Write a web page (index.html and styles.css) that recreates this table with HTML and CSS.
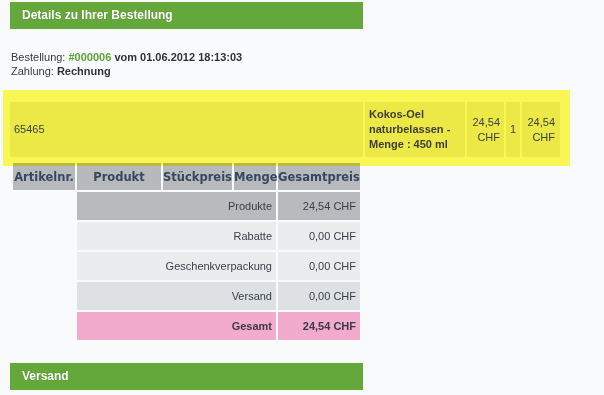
FILE: index.html
```html
<!DOCTYPE html>
<html lang="de">
<head>
<meta charset="utf-8">
<title>Details zu Ihrer Bestellung</title>
<link rel="stylesheet" href="styles.css">
</head>
<body>
<div class="page">
  <div class="bar">Details zu Ihrer Bestellung</div>
  <div class="info">
    <div>Bestellung: <span class="ordno">#000006</span> <b>vom 01.06.2012 18:13:03</b></div>
    <div>Zahlung: <b>Rechnung</b></div>
  </div>
  <div class="hl">
    <div class="hl-cell c-art">65465</div>
    <div class="hl-cell c-prod">Kokos-Oel naturbelassen - Menge : 450 ml</div>
    <div class="hl-cell c-price">24,54 CHF</div>
    <div class="hl-cell c-qty">1</div>
    <div class="hl-cell c-total">24,54 CHF</div>
  </div>
  <table class="order">
    <colgroup>
      <col class="w-art"><col class="w-prod"><col class="w-price"><col class="w-qty"><col class="w-total">
    </colgroup>
    <thead>
      <tr>
        <th>Artikelnr.</th><th>Produkt</th><th>Stückpreis</th><th>Menge</th><th>Gesamtpreis</th>
      </tr>
    </thead>
    <tbody>
      <tr class="r-sub"><td class="empty"></td><td colspan="3">Produkte</td><td>24,54 CHF</td></tr>
      <tr class="r-light"><td class="empty"></td><td colspan="3">Rabatte</td><td>0,00 CHF</td></tr>
      <tr class="r-light"><td class="empty"></td><td colspan="3">Geschenkverpackung</td><td>0,00 CHF</td></tr>
      <tr class="r-ship"><td class="empty"></td><td colspan="3">Versand</td><td>0,00 CHF</td></tr>
      <tr class="r-total"><td class="empty"></td><td colspan="3">Gesamt</td><td>24,54 CHF</td></tr>
    </tbody>
  </table>
  <div class="bar bar-ship">Versand</div>
</div>
</body>
</html>
```
FILE: styles.css
```css
html, body {
  margin: 0;
  padding: 0;
  background: #f9fafc;
}
body {
  font-family: "Liberation Sans", Arial, sans-serif;
  font-size: 11px;
  color: #3a3d44;
}
.page {
  padding: 2px 0 0 10px;
  width: 353px;
}
.bar {
  height: 27px;
  line-height: 27px;
  background: #64a73b;
  color: #ffffff;
  font-weight: bold;
  font-size: 12px;
  padding-left: 12px;
  text-shadow: 0 0 1px rgba(40, 70, 20, 0.35);
}
.bar-ship {
  margin-top: 21px;
}
.info {
  margin-top: 21px;
  padding-left: 1px;
  line-height: 14px;
  color: #3a3a3a;
}
.info b {
  color: #333333;
}
.ordno {
  color: #5ea43a;
  font-weight: bold;
}
.hl {
  position: relative;
  z-index: 1;
  mix-blend-mode: multiply;
  display: flex;
  gap: 2px;
  width: 550px;
  margin: 12px 0 -5px -7px;
  padding: 12px 10px 9px 7px;
  background: #fffc57;
}
.hl-cell {
  background: #f2ed47;
  display: flex;
  align-items: center;
  line-height: 15px;
  height: 55px;
  box-sizing: border-box;
  color: #3d434c;
}
.c-art {
  width: 353px;
  padding-left: 4px;
}
.c-prod {
  width: 100px;
  padding: 0 4px;
  font-weight: bold;
  color: #3f3f3a;
}
.c-price {
  width: 37px;
  padding: 0 4px;
  justify-content: flex-end;
  text-align: right;
}
.c-qty {
  width: 14px;
  justify-content: center;
}
.c-total {
  width: 38px;
  padding: 0 5px 0 3px;
  justify-content: flex-end;
  text-align: right;
}
.order {
  border-collapse: separate;
  border-spacing: 2px;
  table-layout: fixed;
  width: 351px;
  margin-left: 1px;
}
.w-art { width: 62px; }
.w-prod { width: 84px; }
.w-price { width: 69px; }
.w-qty { width: 42px; }
.w-total { width: 82px; }
.order th {
  background: #b8b9bc;
  height: 27px;
  padding: 0;
  font-family: "DejaVu Sans", Verdana, sans-serif;
  font-size: 11.5px;
  font-weight: bold;
  color: #34495e;
  text-align: center;
  white-space: nowrap;
  overflow: visible;
}
.order td {
  height: 28px;
  padding: 0 4px 0 0;
  text-align: right;
  color: #3b4049;
}
.order td.empty {
  background: transparent;
}
.r-sub td { background: #b9babd; }
.r-light td { background: #ebecee; }
.r-ship td { background: #dde1e4; }
.r-total td {
  background: #f2abcd;
  font-weight: bold;
  color: #3a3a48;
}
```
